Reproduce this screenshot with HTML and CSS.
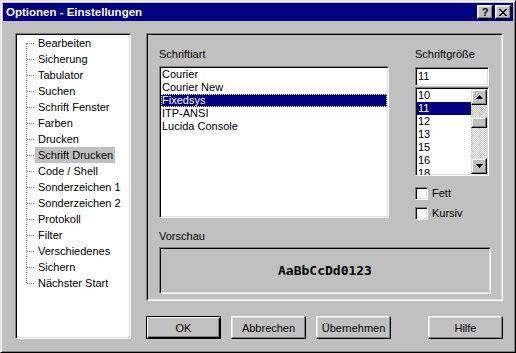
FILE: index.html
```html
<!DOCTYPE html>
<html lang="de">

<head>
  <meta charset="UTF-8">
  <title>Optionen - Einstellungen</title>
  <link rel="stylesheet" href="styles.css">
</head>

<body>
  <div class="dialog">
    <div class="titlebar">
      <span class="title">Optionen - Einstellungen</span>
      <span class="title-btn help">?</span>
      <span class="title-btn close">
        <svg width="8" height="7" viewBox="0 0 8 7" shape-rendering="crispEdges">
          <path d="M0 0h2v1h1v1h2V1h1V0h2v1H7v1H6v1H5v1h1v1h1v1h1v1H6V6H5V5H3v1H2v1H0V6h1V5h1V4h1V3H2V2H1V1H0z" />
        </svg>
      </span>
    </div>

    <div class="dialog-body">
      <div class="tree">
        <ul>
          <li><span>Bearbeiten</span></li>
          <li><span>Sicherung</span></li>
          <li><span>Tabulator</span></li>
          <li><span>Suchen</span></li>
          <li><span>Schrift Fenster</span></li>
          <li><span>Farben</span></li>
          <li><span>Drucken</span></li>
          <li class="selected"><span>Schrift Drucken</span></li>
          <li><span>Code / Shell</span></li>
          <li><span>Sonderzeichen 1</span></li>
          <li><span>Sonderzeichen 2</span></li>
          <li><span>Protokoll</span></li>
          <li><span>Filter</span></li>
          <li><span>Verschiedenes</span></li>
          <li><span>Sichern</span></li>
          <li><span>Nächster Start</span></li>
        </ul>
      </div>

      <div class="right">
        <section class="panel">
          <div class="font-row">
            <div class="font-col">
              <label>Schriftiart</label>
              <ul class="listbox font-list">
                <li>Courier</li>
                <li>Courier New</li>
                <li class="selected">Fixedsys</li>
                <li>ITP-ANSI</li>
                <li>Lucida Console</li>
              </ul>
            </div>

            <div class="size-col">
              <label>Schriftgröße</label>
              <div class="field">11</div>
              <div class="listbox size-list">
                <ul>
                  <li>10</li>
                  <li class="selected">11</li>
                  <li>12</li>
                  <li>13</li>
                  <li>15</li>
                  <li>16</li>
                  <li>18</li>
                </ul>
                <div class="vscroll">
                  <span class="sb-btn">
                    <svg width="7" height="4" viewBox="0 0 7 4" shape-rendering="crispEdges">
                      <path d="M3 0h1v1h1v1h1v1h1v1H0V3h1V2h1V1h1z" />
                    </svg>
                  </span>
                  <span class="sb-track"><span class="sb-thumb"></span></span>
                  <span class="sb-btn">
                    <svg width="7" height="4" viewBox="0 0 7 4" shape-rendering="crispEdges">
                      <path d="M0 0h7v1H6v1H5v1H4v1H3V3H2V2H1V1H0z" />
                    </svg>
                  </span>
                </div>
              </div>
              <div class="check"><span class="box"></span>Fett</div>
              <div class="check"><span class="box"></span>Kursiv</div>
            </div>
          </div>

          <label class="preview-label">Vorschau</label>
          <div class="preview">AaBbCcDd0123</div>
        </section>

        <div class="buttons">
          <button class="default">OK</button>
          <button>Abbrechen</button>
          <button>Übernehmen</button>
          <button class="help-btn">Hilfe</button>
        </div>
      </div>
    </div>
  </div>
</body>

</html>
```

FILE: styles.css
```css
body {
  margin: 0;
  font-family: 'Liberation Sans', Arial, sans-serif;
  font-size: 11px;
  color: #000;
}

ul {
  margin: 0;
  padding: 0;
  list-style: none;
}

label {
  display: block;
  line-height: 13px;
}

.dialog {
  width: 516px;
  height: 353px;
  box-sizing: border-box;
  background: #c0c0c0;
  border: 1px solid;
  border-color: #dfdfdf #000 #000 #dfdfdf;
  box-shadow: inset 1px 1px #fff, inset -1px -1px #808080;
  padding: 2px;
}

/* title bar */

.titlebar {
  height: 18px;
  background: #000080;
  display: flex;
  align-items: center;
  padding: 0 2px 0 3px;
}

.title {
  flex: 1;
  color: #fff;
  font-weight: bold;
  font-size: 11.5px;
}

.title-btn {
  width: 16px;
  height: 14px;
  box-sizing: border-box;
  display: flex;
  align-items: center;
  justify-content: center;
  background: #c0c0c0;
  border: 1px solid;
  border-color: #fff #000 #000 #fff;
  box-shadow: inset -1px -1px #808080, inset 1px 1px #dfdfdf;
}

.title-btn.help {
  font-weight: bold;
  font-size: 11px;
  line-height: 11px;
}

.title-btn.close {
  margin-left: 2px;
}

/* shared borders */

.tree,
.panel,
.listbox,
.field,
.preview,
.box {
  box-sizing: border-box;
  border: 1px solid;
  border-color: #808080 #fff #fff #808080;
  box-shadow: inset 1px 1px #000, inset -1px -1px #dfdfdf;
  padding: 1px;
}

.dialog-body {
  display: grid;
  grid-template-columns: 116px 357px;
  column-gap: 15px;
  padding: 12px 10px 0 12px;
}

/* tree */

.tree {
  height: 306px;
  background: #fff;
}

.tree ul {
  position: relative;
}

.tree ul::before {
  content: "";
  position: absolute;
  left: 9px;
  top: 8px;
  height: 240px;
  border-left: 1px dotted #808080;
}

.tree li {
  display: flex;
  align-items: center;
  height: 16px;
  padding-left: 10px;
}

.tree li::before {
  content: "";
  width: 7px;
  border-top: 1px dotted #808080;
  margin-right: 1px;
}

.tree li span {
  line-height: 16px;
  padding: 0 2px 0 3px;
}

.tree li.selected span {
  background: #c0c0c0;
}

/* panel */

.right {
  display: flex;
  flex-direction: column;
}

.panel {
  height: 268px;
  padding: 14px 11px 0 12px;
}

.font-row {
  display: flex;
  gap: 26px;
  height: 170px;
  align-items: flex-start;
}

.font-col {
  width: 230px;
}

.font-col label {
  margin-bottom: 5px;
}

.listbox {
  background: #fff;
}

.font-list {
  height: 152px;
}

.font-list li,
.size-list li {
  height: 13px;
  line-height: 13px;
  padding-left: 1px;
}

.font-list li.selected {
  background: #000080;
  color: #fff;
  outline: 1px dotted #ffff80;
  outline-offset: -1px;
}

.size-list li.selected {
  background: #000080;
  color: #fff;
}

.size-col {
  width: 74px;
}

.field {
  margin-top: 6px;
  height: 19px;
  background: #fff;
  line-height: 15px;
  padding-left: 2px;
}

.size-list {
  margin-top: 1px;
  height: 89px;
  display: flex;
  overflow: hidden;
}

.size-list ul {
  flex: 1;
}

.vscroll {
  width: 16px;
  display: flex;
  flex-direction: column;
}

.sb-btn,
.sb-thumb,
button {
  box-sizing: border-box;
  background: #c0c0c0;
  border: 1px solid;
  border-color: #dfdfdf #000 #000 #dfdfdf;
  box-shadow: inset -1px -1px #808080, inset 1px 1px #fff;
}

.sb-btn {
  height: 16px;
  display: flex;
  align-items: center;
  justify-content: center;
}

.sb-track {
  flex: 1;
  background: repeating-conic-gradient(#c0c0c0 0 25%, #fff 0 50%) 0 0 / 2px 2px;
}

.sb-thumb {
  display: block;
  height: 11px;
  margin-top: 12px;
}

.check {
  display: flex;
  align-items: center;
  gap: 4px;
  height: 13px;
  line-height: 13px;
  margin-top: 11px;
}

.check + .check {
  margin-top: 7px;
}

.box {
  width: 13px;
  height: 13px;
  background: #fff;
}

.preview-label {
  margin-top: 12px;
}

.preview {
  margin-top: 4px;
  height: 47px;
  display: flex;
  align-items: center;
  justify-content: center;
  font-family: 'DejaVu Sans Mono', monospace;
  font-weight: bold;
  font-size: 13px;
}

/* buttons */

.buttons {
  display: flex;
  gap: 10px;
  margin-top: 15px;
}

button {
  width: 75px;
  height: 23px;
  font-family: inherit;
  font-size: 11px;
  color: #000;
  padding: 0;
  border-color: #fff #000 #000 #fff;
  box-shadow: inset -1px -1px #808080, inset 1px 1px #dfdfdf;
}

button.default {
  border-color: #000;
  box-shadow: inset 1px 1px #fff, inset -1px -1px #000, inset -2px -2px #808080;
}

.help-btn {
  margin-left: auto;
}
```
